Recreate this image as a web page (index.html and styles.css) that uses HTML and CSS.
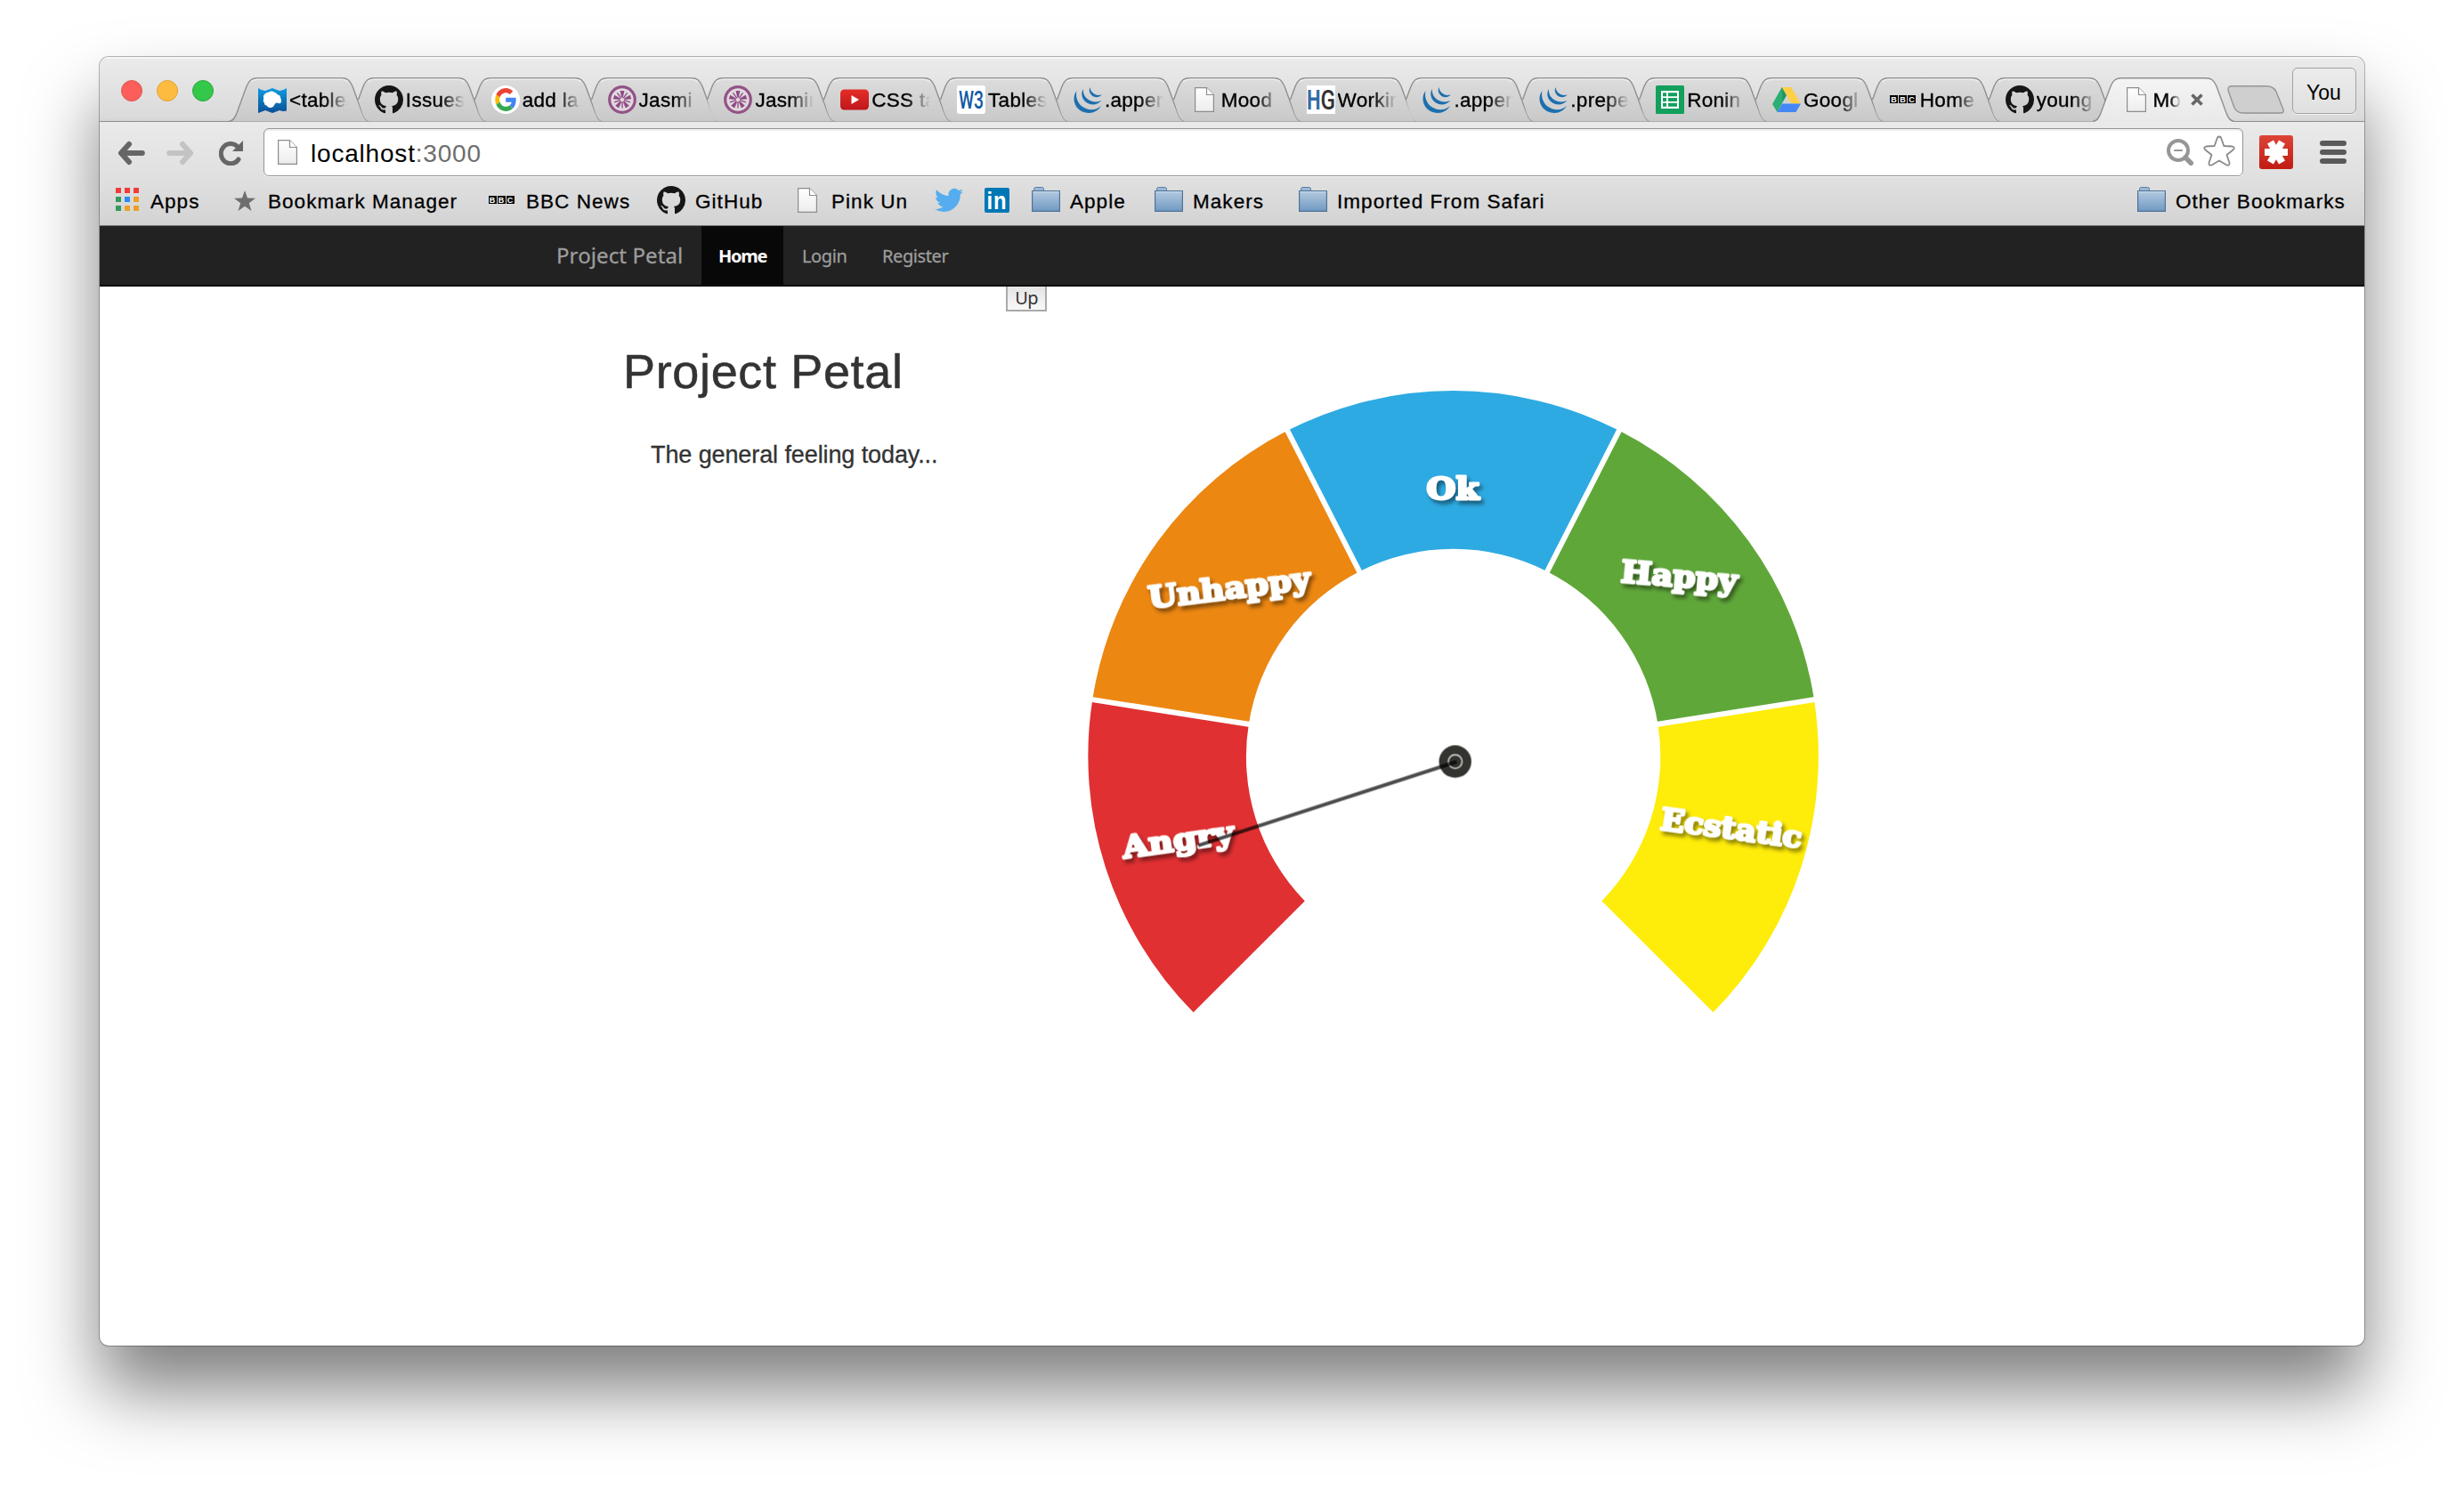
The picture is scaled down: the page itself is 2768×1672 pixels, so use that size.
FILE: index.html
```html
<!DOCTYPE html>
<html lang="en">
<head>
<meta charset="utf-8">
<title>Mood</title>
<link rel="stylesheet" href="styles.css">
</head>
<body>
<svg class="defs" width="0" height="0" aria-hidden="true">
  <defs>
    <linearGradient id="tabFill" x1="0" y1="0" x2="0" y2="1"><stop offset="0" stop-color="#dcdcdd"/><stop offset="1" stop-color="#c9c9ca"/></linearGradient>
    <linearGradient id="activeFill" x1="0" y1="0" x2="0" y2="1"><stop offset="0" stop-color="#f4f4f4"/><stop offset="1" stop-color="#e9e9e9"/></linearGradient>
    <linearGradient id="folderFill" x1="0" y1="0" x2="0" y2="1"><stop offset="0" stop-color="#b4cae0"/><stop offset="1" stop-color="#7099c2"/></linearGradient>
    <linearGradient id="pageFill" x1="0" y1="0" x2="0" y2="1"><stop offset="0" stop-color="#fff"/><stop offset="1" stop-color="#ececec"/></linearGradient>
    <linearGradient id="ytFill" x1="0" y1="0" x2="0" y2="1"><stop offset="0" stop-color="#e52d27"/><stop offset="1" stop-color="#bf171d"/></linearGradient>
    <linearGradient id="mapFill" x1="0" y1="0" x2="0" y2="1"><stop offset="0" stop-color="#0e9be0"/><stop offset="1" stop-color="#0a4f96"/></linearGradient>
    <linearGradient id="passFill" x1="0" y1="0" x2="0" y2="1"><stop offset="0" stop-color="#dd4338"/><stop offset="1" stop-color="#c11d12"/></linearGradient>
    <symbol id="tab-first" viewBox="0 0 160 50"><path fill="url(#tabFill)" d="M0 49.5C5 49 7 45 9 40L20 10C23 3 26 .8 32 .8H127C133 .8 136 3 139 10L150 40C152 45 154 49 159 49.5Z"/><path fill="none" stroke="#8f8f8f" stroke-width="1.4" d="M0 49.5C5 49 7 45 9 40L20 10C23 3 26 .8 32 .8H127C133 .8 136 3 139 10L150 40C152 45 154 49 159 49.5"/><path fill="none" stroke="#efefef" stroke-width="1.2" d="M25 5Q28 2.2 33 2.2H126Q131 2.2 134 5"/></symbol>
    <symbol id="tab-next" viewBox="0 0 160 50"><path fill="url(#tabFill)" d="M14.5 25L20 10C23 3 26 .8 32 .8H127C133 .8 136 3 139 10L150 40C152 45 154 49 159 49.5H28C23 49 21 45 19 40Z"/><path fill="none" stroke="#8f8f8f" stroke-width="1.4" d="M14.5 25L20 10C23 3 26 .8 32 .8H127C133 .8 136 3 139 10L150 40C152 45 154 49 159 49.5"/><path fill="none" stroke="#efefef" stroke-width="1.2" d="M25 5Q28 2.2 33 2.2H126Q131 2.2 134 5"/></symbol>
    <symbol id="tab-active" viewBox="0 0 160 50"><path fill="url(#activeFill)" d="M0 50C5 49 7 45 9 40L20 10C23 3 26 .8 32 .8H127C133 .8 136 3 139 10L150 40C152 45 154 49 160 50Z"/><path fill="none" stroke="#8f8f8f" stroke-width="1.4" d="M0 49.5C5 49 7 45 9 40L20 10C23 3 26 .8 32 .8H127C133 .8 136 3 139 10L150 40C152 45 154 49 159 49.5"/></symbol>
    <symbol id="page" viewBox="0 0 32 32"><path fill="url(#pageFill)" stroke="#8c8c8c" stroke-width="1.2" d="M5.6 2.6H18.5L26.4 10.5V29.4H5.6Z"/><path fill="#fff" stroke="#8c8c8c" stroke-width="1.2" d="M18.5 2.6V10.5H26.4"/></symbol>
    <symbol id="github" viewBox="0 0 16 16"><path fill="#171515" d="M8 0C3.58 0 0 3.58 0 8c0 3.54 2.29 6.53 5.47 7.59.4.07.55-.17.55-.38 0-.19-.01-.82-.01-1.49-2.01.37-2.53-.49-2.69-.94-.09-.23-.48-.94-.82-1.13-.28-.15-.68-.52-.01-.53.63-.01 1.08.58 1.23.82.72 1.21 1.87.87 2.33.66.07-.52.28-.87.51-1.07-1.78-.2-3.64-.89-3.64-3.95 0-.87.31-1.59.82-2.15-.08-.2-.36-1.02.08-2.12 0 0 .67-.21 2.2.82.64-.18 1.32-.27 2-.27.68 0 1.36.09 2 .27 1.53-1.04 2.2-.82 2.2-.82.44 1.1.16 1.92.08 2.12.51.56.82 1.27.82 2.15 0 3.07-1.87 3.75-3.65 3.95.29.25.54.73.54 1.48 0 1.07-.01 1.93-.01 2.2 0 .21.15.46.55.38A8.013 8.013 0 0016 8c0-4.42-3.58-8-8-8z"/></symbol>
    <symbol id="map" viewBox="0 0 32 32"><path fill="url(#mapFill)" d="M0 3Q4.500 6 8 6L16 3L24 6Q28 6 32 3V28.500Q28 29.500 24 28L16 31L8 28Q4 29.500 0 31Z"/><path fill="#fff" d="M6 11.500Q8 8 12 7.500Q15 5.500 18 7.500Q20.500 8 21.500 10L24.500 11.500L25.500 15Q27 17.500 25.500 19.500Q24 21 21.500 19.500Q19.500 19 18.500 21.500Q17.500 24.500 14.500 25Q11 25.500 9.500 22.500Q6.500 22 7 19.500Q5 18 6 15.500Z"/></symbol>
    <symbol id="google" viewBox="0 0 32 32"><circle cx="16" cy="16" r="16" fill="#fff"/><g transform="translate(4.200 3) scale(.5 .54)"><path fill="#EA4335" d="M24 9.500c3.540 0 6.710 1.220 9.210 3.600l6.850-6.850C35.900 2.380 30.470 0 24 0 14.620 0 6.510 5.380 2.560 13.220l7.980 6.190C12.430 13.720 17.740 9.500 24 9.500z"/><path fill="#4285F4" d="M46.980 24.550c0-1.570-.15-3.090-.38-4.550H24v9.020h12.940c-.58 2.960-2.260 5.480-4.780 7.180l7.730 6c4.510-4.180 7.090-10.360 7.090-17.650z"/><path fill="#FBBC05" d="M10.530 28.590c-.48-1.450-.76-2.990-.76-4.590s.27-3.140.76-4.590l-7.980-6.190C.92 16.460 0 20.120 0 24c0 3.880.92 7.540 2.560 10.780l7.970-6.190z"/><path fill="#34A853" d="M24 48c6.480 0 11.930-2.130 15.890-5.810l-7.730-6c-2.150 1.450-4.920 2.300-8.160 2.300-6.260 0-11.570-4.220-13.470-9.910l-7.980 6.190C6.510 42.620 14.620 48 24 48z"/></g></symbol>
    <symbol id="jasmine" viewBox="0 0 32 32"><circle cx="16" cy="16" r="14.300" fill="#e0d9df" stroke="#945286" stroke-width="3.200"/><g fill="#8f4a82"><path id="petal" d="M15.200 13.500L13.600 6H18.400L16.800 13.500Z"/><use href="#petal" transform="rotate(72 16 16)"/><use href="#petal" transform="rotate(144 16 16)"/><use href="#petal" transform="rotate(216 16 16)"/><use href="#petal" transform="rotate(288 16 16)"/></g><g stroke="#8f4a82" stroke-width="1.300"><path id="sepal" d="M16 18V25.500"/><use href="#sepal" transform="rotate(72 16 16)"/><use href="#sepal" transform="rotate(144 16 16)"/><use href="#sepal" transform="rotate(216 16 16)"/><use href="#sepal" transform="rotate(288 16 16)"/></g></symbol>
    <symbol id="youtube" viewBox="0 0 32 32"><rect y="4.500" width="32" height="23" rx="4.500" fill="url(#ytFill)"/><path fill="#fff" d="M12.500 11L21 16L12.500 21Z"/></symbol>
    <symbol id="w3" viewBox="0 0 32 32"><rect width="32" height="32" rx="3" fill="#fff"/><text x="2" y="25.500" font-family="Roboto, sans-serif" font-size="27" font-weight="500" fill="#1259a5" textLength="28" lengthAdjust="spacingAndGlyphs">W3</text></symbol>
    <symbol id="hg" viewBox="0 0 32 32"><rect width="32" height="32" fill="#fff"/><text x="0" y="27" font-family="Roboto, sans-serif" font-size="31" font-weight="700" fill="#346ca5" textLength="15.500" lengthAdjust="spacingAndGlyphs">H</text><text x="15.500" y="27" font-family="Roboto, sans-serif" font-size="31" font-weight="500" fill="#333" textLength="16.500" lengthAdjust="spacingAndGlyphs">G</text></symbol>
    <symbol id="jquery" viewBox="0 0 32 32"><g fill="#1d6fae"><path d="M3.500 6C-2 13 0 25 10 29.500C18 33 27 30 31 23C25 28.500 16 28.500 9.500 23.500C4 19 2 12 3.500 6Z"/><path d="M11 4C7.500 9 9.500 16 15 19.500C20.500 23 27.500 21.500 31.500 17C26 19.500 20.500 18.500 16 15.500C12 12.500 10.500 8.500 11 4Z"/><path d="M18.500 2C16.500 6 18.500 10.500 22.500 12.500C26 14 29.500 13 31.500 10.500C28 11.500 25 11 22.500 9C20 7.200 18.800 5 18.500 2Z"/></g></symbol>
    <symbol id="sheets" viewBox="0 0 32 32"><rect width="32" height="32" rx="1.500" fill="#12a05c"/><path fill="#fff" d="M6 6H26V26H6Z"/><path fill="#12a05c" d="M8 8.200H12V12.200H8ZM14 8.200H24V12.200H14ZM8 14H12V18H8ZM14 14H24V18H14ZM8 19.800H12V23.800H8ZM14 19.800H24V23.800H14Z"/></symbol>
    <symbol id="drive" viewBox="0 0 32 32"><path fill="#2bae73" d="M10.700 2L16 11L5.500 30L0 21Z"/><path fill="#ffcf48" d="M10.700 2H21.300L32 20.500H21.300Z"/><path fill="#4587f5" d="M11 20.500H32L26.500 30H5.500Z"/><path fill="#1b7c50" d="M10.700 2L16 11L11.500 18.500Z" opacity=".45"/></symbol>
    <symbol id="bbc" viewBox="0 0 32 32"><path d="M1 11H10V20H1ZM11 11H20V20H11ZM21 11H30V20H21Z"/><g font-family="Liberation Sans, Arial, sans-serif" font-size="9" font-weight="700" fill="#fff" text-anchor="middle"><text x="5.500" y="18.700">B</text><text x="15.500" y="18.700">B</text><text x="25.500" y="18.700">C</text></g></symbol>
    <symbol id="folder" viewBox="0 0 32 32"><path fill="#9db7d6" stroke="#5b7da3" d="M2.500 7V3.500Q2.500 1.500 4.500 1.500H11.500Q13.500 1.500 13.500 3.500V7"/><path fill="url(#folderFill)" stroke="#4f7398" stroke-width="1.200" d="M.6 5.600H31.400V28.400H.6Z"/><path stroke="#cfdfee" d="M1.200 6.700H30.800"/></symbol>
    <symbol id="back" viewBox="0 0 32 28"><path fill="none" stroke-width="6" stroke-linecap="round" stroke-linejoin="round" d="M13 4L4 14L13 24M4.500 14H27.800"/></symbol>
  </defs>
</svg>

<div class="window">
  <header class="tabstrip">
    <div class="lights"><span class="light light-close"></span><span class="light light-min"></span><span class="light light-max"></span></div>
    <nav class="tabs">
      <div class="tab"><svg class="shape"><use href="#tab-first"/></svg><svg class="icon"><use href="#map"/></svg><span class="title">&lt;table&gt;</span></div>
      <div class="tab"><svg class="shape"><use href="#tab-next"/></svg><svg class="icon"><use href="#github"/></svg><span class="title">Issues</span></div>
      <div class="tab"><svg class="shape"><use href="#tab-next"/></svg><svg class="icon"><use href="#google"/></svg><span class="title">add la</span></div>
      <div class="tab"><svg class="shape"><use href="#tab-next"/></svg><svg class="icon"><use href="#jasmine"/></svg><span class="title">Jasmi</span></div>
      <div class="tab"><svg class="shape"><use href="#tab-next"/></svg><svg class="icon"><use href="#jasmine"/></svg><span class="title">Jasmin</span></div>
      <div class="tab"><svg class="shape"><use href="#tab-next"/></svg><svg class="icon"><use href="#youtube"/></svg><span class="title">CSS ta</span></div>
      <div class="tab"><svg class="shape"><use href="#tab-next"/></svg><svg class="icon"><use href="#w3"/></svg><span class="title">Tables</span></div>
      <div class="tab"><svg class="shape"><use href="#tab-next"/></svg><svg class="icon"><use href="#jquery"/></svg><span class="title">.appen</span></div>
      <div class="tab"><svg class="shape"><use href="#tab-next"/></svg><svg class="icon"><use href="#page"/></svg><span class="title">Mood</span></div>
      <div class="tab"><svg class="shape"><use href="#tab-next"/></svg><svg class="icon"><use href="#hg"/></svg><span class="title">Workin</span></div>
      <div class="tab"><svg class="shape"><use href="#tab-next"/></svg><svg class="icon"><use href="#jquery"/></svg><span class="title">.appen</span></div>
      <div class="tab"><svg class="shape"><use href="#tab-next"/></svg><svg class="icon"><use href="#jquery"/></svg><span class="title">.prepe</span></div>
      <div class="tab"><svg class="shape"><use href="#tab-next"/></svg><svg class="icon"><use href="#sheets"/></svg><span class="title">Ronin</span></div>
      <div class="tab"><svg class="shape"><use href="#tab-next"/></svg><svg class="icon"><use href="#drive"/></svg><span class="title">Googl</span></div>
      <div class="tab"><svg class="shape"><use href="#tab-next"/></svg><svg class="icon"><use href="#bbc"/></svg><span class="title">Home</span></div>
      <div class="tab"><svg class="shape"><use href="#tab-next"/></svg><svg class="icon"><use href="#github"/></svg><span class="title">young</span></div>
      <div class="tab tab-active"><svg class="shape"><use href="#tab-active"/></svg><svg class="icon"><use href="#page"/></svg><span class="title">Mo</span><svg class="close" viewBox="0 0 16 16"><path d="M2.500 2.500L13.500 13.500M13.500 2.500L2.500 13.500"/></svg></div>
    </nav>
    <svg class="newtab" viewBox="0 0 64 32"><path fill="#cfcfcf" stroke="#949494" stroke-width="1.400" d="M4.500 .8H44Q52 .8 55 7L63 27Q64 31 60 31H18Q11 31 8 25L1.200 6Q.3 .8 4.500 .8Z"/></svg>
    <div class="user">You</div>
  </header>

  <div class="toolbar">
    <svg class="nav-icon back"><use href="#back"/></svg>
    <svg class="nav-icon forward"><use href="#back"/></svg>
    <svg class="reload" viewBox="0 0 28 28"><path fill="none" stroke="#666" stroke-width="5" stroke-linecap="round" d="M20.500 6.500A10.800 11.200 0 1 0 22 21"/><path fill="#666" d="M27 0V12H15Z"/></svg>
    <div class="omnibox">
      <svg class="icon"><use href="#page"/></svg>
      <span class="url">localhost<span class="port">:3000</span></span>
      <svg class="magnifier" viewBox="0 0 30 30"><g fill="none" stroke="#969696" stroke-linecap="round"><circle cx="13" cy="13" r="11" stroke-width="4"/><path stroke-width="5.500" d="M21 21L27.300 27.300"/><path stroke-width="2" d="M9 13H17"/></g></svg>
      <svg class="star-outline" viewBox="0 0 36 36"><path fill="#fff" stroke="#8a8a8a" stroke-width="1.800" stroke-linejoin="round" d="M18 1.500Q19.800 1.500 20.500 4L23.300 12L32.500 12.500Q36.500 13.500 33.500 16.500L26.500 22L29.500 31Q30 34.500 26.500 33.500L18 28.500L9.500 33.500Q6 34.500 6.500 31L9.500 22L2.500 16.500Q-.5 13.500 3.500 12.500L12.700 12L15.500 4Q16.200 1.500 18 1.500Z"/></svg>
    </div>
    <svg class="extension" viewBox="0 0 38 38"><rect width="38" height="38" rx="3" fill="url(#passFill)"/><g stroke="#fff" stroke-width="8"><path d="M6 19H32"/><path d="M12.500 7.500L25.500 30.500"/><path d="M25.500 7.500L12.500 30.500"/></g></svg>
    <svg class="menu" viewBox="0 0 30 26"><g fill="#5a5a5a"><rect width="30" height="6" rx="3"/><rect y="10" width="30" height="6" rx="3"/><rect y="20" width="30" height="6" rx="3"/></g></svg>
  </div>

  <div class="bookmarks">
    <a class="bookmark"><svg class="icon" viewBox="0 0 32 32"><path fill="#f13b3a" d="M4 2H10V8H4ZM14 2H20V8H14ZM24 2H30V8H24Z"/><path fill="#35995c" d="M4 12H10V18H4ZM4 22H10V28H4Z"/><path fill="#2c8bf2" d="M14 12H20V18H14Z"/><path fill="#ef9f27" d="M24 12H30V18H24ZM14 22H20V28H14ZM24 22H30V28H24Z"/></svg>Apps</a>
    <a class="bookmark"><svg class="icon" viewBox="0 0 32 32"><path fill="#6e6e6e" d="M17 5L20 13.500L29 13.700L21.800 19.200L24.500 28L17 22.800L9.500 28L12.200 19.200L5 13.700L14 13.500Z"/></svg>Bookmark Manager</a>
    <a class="bookmark"><svg class="icon"><use href="#bbc"/></svg>BBC News</a>
    <a class="bookmark"><svg class="icon"><use href="#github"/></svg>GitHub</a>
    <a class="bookmark"><svg class="icon"><use href="#page"/></svg>Pink Un</a>
    <a class="bookmark"><svg class="icon" viewBox="0 0 24 24"><path fill="#55acee" d="M23.953 4.570a10 10 0 01-2.825.775 4.958 4.958 0 002.163-2.723c-.951.555-2.005.959-3.127 1.184a4.920 4.920 0 00-8.384 4.482C7.690 8.095 4.067 6.130 1.640 3.162a4.822 4.822 0 00-.666 2.475c0 1.710.87 3.213 2.188 4.096a4.904 4.904 0 01-2.228-.616v.06a4.923 4.923 0 003.946 4.827 4.996 4.996 0 01-2.212.085 4.936 4.936 0 004.604 3.417 9.867 9.867 0 01-6.102 2.105c-.39 0-.779-.023-1.170-.067a13.995 13.995 0 007.557 2.209c9.053 0 13.998-7.496 13.998-13.985 0-.21 0-.42-.015-.63A9.935 9.935 0 0024 4.590z"/></svg></a>
    <a class="bookmark"><svg class="icon" viewBox="0 0 32 32"><rect x="2" y="2" width="28" height="28" rx="2" fill="#0077b5"/><text x="4.500" y="26" font-family="Liberation Sans, Arial, sans-serif" font-size="27" font-weight="700" fill="#fff" textLength="23" lengthAdjust="spacingAndGlyphs">in</text></svg></a>
    <a class="bookmark"><svg class="icon"><use href="#folder"/></svg>Apple</a>
    <a class="bookmark"><svg class="icon"><use href="#folder"/></svg>Makers</a>
    <a class="bookmark"><svg class="icon"><use href="#folder"/></svg>Imported From Safari</a>
    <a class="bookmark"><svg class="icon"><use href="#folder"/></svg>Other Bookmarks</a>
  </div>

  <nav class="navbar">
    <a class="brand">Project Petal</a>
    <a class="link link-active">Home</a>
    <a class="link link-login">Login</a>
    <a class="link link-register">Register</a>
  </nav>

  <main class="content">
    <button class="up">Up</button>
    <div class="row">
      <section class="intro">
        <h1>Project Petal</h1>
        <p>The general feeling today...</p>
      </section>
      <svg class="gauge" viewBox="-432.600 -429.400 860 730">
        <path fill="#e03032" d="M-292 288.200A410.300 410.300 0 0 1 -405.200 -64.200L-229.700 -36.400A232.600 232.600 0 0 0 -166.800 163Z"/>
        <path fill="#ec8712" d="M-405.200 -64.200A410.300 410.300 0 0 1 -186.300 -365.600L-105.600 -207.200A232.600 232.600 0 0 0 -229.700 -36.400Z"/>
        <path fill="#2eaae2" d="M-186.300 -365.600A410.300 410.300 0 0 1 186.300 -365.600L105.600 -207.200A232.600 232.600 0 0 0 -105.600 -207.200Z"/>
        <path fill="#60a73a" d="M186.300 -365.600A410.300 410.300 0 0 1 405.200 -64.200L229.700 -36.400A232.600 232.600 0 0 0 105.600 -207.200Z"/>
        <path fill="#feec0a" d="M405.200 -64.200A410.300 410.300 0 0 1 292 288.200L166.800 163A232.600 232.600 0 0 0 229.700 -36.400Z"/>
        <path stroke="#fff" stroke-width="6" d="M-188.600 -370.100L-103 -202.200M188.600 -370.100L103 -202.200M-410 -64L-225 -34.900M410 -64L225 -34.900"/>
        <g class="moods">
          <text transform="translate(-370 115) rotate(-8)" textLength="126" lengthAdjust="spacingAndGlyphs">Angry</text>
          <text transform="translate(-341 -165.500) rotate(-7)" textLength="183" lengthAdjust="spacingAndGlyphs">Unhappy</text>
          <text transform="translate(-30 -288.500)" textLength="59" lengthAdjust="spacingAndGlyphs">Ok</text>
          <text transform="translate(187.500 -195.500) rotate(4.800)" textLength="131" lengthAdjust="spacingAndGlyphs">Happy</text>
          <text transform="translate(231.500 82.500) rotate(7.600)" textLength="160" lengthAdjust="spacingAndGlyphs">Ecstatic</text>
        </g>
        <circle cx="2.100" cy="6.300" r="18.200" fill="#33332f"/>
        <circle cx="2.100" cy="6.300" r="7.700" fill="none" stroke="#d0d0d0" stroke-width="1.600"/>
        <path stroke="#000" stroke-opacity=".7" stroke-width="4" d="M3.800 6.500L-286.500 100.600"/>
      </svg>
    </div>
  </main>
</div>
</body>
</html>
```
FILE: styles.css
```css
* { box-sizing: border-box; }

body {
  margin: 0;
  height: 1672px;
  padding: 64px 112px 160px;
  background: #fff;
  font-family: "Liberation Sans", Arial, sans-serif;
  overflow: hidden;
}

.defs { position: absolute; }

.window {
  width: 2544px;
  height: 1448px;
  display: flex;
  flex-direction: column;
  background: #fff;
  border-radius: 10px;
  overflow: hidden;
  box-shadow: 0 0 0 1px rgba(0, 0, 0, .28), 0 50px 80px rgba(0, 0, 0, .5);
}

.icon { width: 32px; height: 32px; flex: none; }

/* tab strip */
.tabstrip {
  display: flex;
  height: 73px;
  flex: none;
  background: linear-gradient(#ebebeb, #dadada 95%, #d4d4d4);
  border-top: 2px solid #f6f6f6;
  border-bottom: 1px solid #8f8f8f;
}

.lights {
  display: flex;
  gap: 16px;
  width: 145px;
  padding: 24px 0 0 24px;
  flex: none;
}

.light { width: 24px; height: 24px; border-radius: 50%; border: 1px solid; }
.light-close { background: #fc5f5b; border-color: #e0524e; }
.light-min { background: #fdbc40; border-color: #dfa136; }
.light-max { background: #34c84a; border-color: #27a93a; }

.tabs { display: flex; padding-top: 21px; flex: none; }

.tab {
  position: relative;
  display: flex;
  width: 130.850px;
  height: 50px;
  padding: 9px 0 0 33px;
  flex: none;
}

.shape { position: absolute; left: 0; top: 0; width: 160px; height: 50px; }
.tab .icon { position: relative; }

.title {
  position: relative;
  width: 66px;
  margin-left: 3px;
  flex: none;
  overflow: hidden;
  white-space: nowrap;
  font-size: 22.500px;
  line-height: 33px;
  letter-spacing: .3px;
  -webkit-text-stroke: .35px #000;
  -webkit-mask-image: linear-gradient(to right, #000 60%, transparent 100%);
  mask-image: linear-gradient(to right, #000 60%, transparent 100%);
}

.tab-active { width: 151px; }
.tab-active .title { width: 31px; }

.close {
  position: relative;
  width: 16px;
  height: 16px;
  margin: 8px 0 0 10px;
  flex: none;
  stroke: #666;
  stroke-width: 3.600px;
}

.newtab { width: 64px; height: 32px; margin-top: 30px; flex: none; }

.user {
  width: 72px;
  height: 52px;
  margin: 10px 0 0 9px;
  border: 1px solid #a2a2a2;
  border-radius: 6px;
  background: linear-gradient(#ececec, #e0e0e0);
  box-shadow: 0 1px 0 #f4f4f4;
  font-size: 23px;
  line-height: 54px;
  text-align: center;
}

/* toolbar */
.toolbar {
  display: flex;
  height: 68px;
  flex: none;
  padding: 7px 20px 0;
  background: linear-gradient(#eaeaea, #dfdfdf);
}

.nav-icon { width: 32px; height: 28px; margin-top: 14px; flex: none; }
.back { stroke: #666; }
.forward { stroke: #c3c3c3; margin-left: 22px; transform: scaleX(-1); }
.reload { width: 28px; height: 28px; margin: 14px 0 0 28px; flex: none; }

.omnibox {
  display: flex;
  width: 2224px;
  height: 54px;
  margin-left: 22px;
  padding: 10px 8px 0 10px;
  flex: none;
  background: #fff;
  border: 1px solid #959595;
  border-radius: 6px;
  box-shadow: inset 0 2px 1px #eee, 0 1px 0 #f2f2f2;
}

.url { margin-left: 10px; flex: 1; font-size: 28px; line-height: 35px; letter-spacing: .800px; }
.port { color: #6e6e6e; }
.magnifier { width: 30px; height: 30px; margin: 1px 11px 0 0; }
.star-outline { width: 36px; height: 36px; margin-top: -3px; }
.extension { width: 38px; height: 38px; margin: 8px 0 0 18px; }
.menu { width: 30px; height: 26px; margin: 14px 0 0 30px; }

/* bookmarks */
.bookmarks {
  display: grid;
  grid-template-columns: 132px 290px 190px 153px 159px 54px 55px 138px 162px 1fr 243px;
  height: 49px;
  flex: none;
  padding: 4px 12px 0 14px;
  background: linear-gradient(#dfdfdf, #d3d3d3);
  border-bottom: 1px solid #777;
}

.bookmark {
  display: flex;
  height: 32px;
  gap: 11px;
  font-size: 22.500px;
  line-height: 35px;
  letter-spacing: 1.050px;
  white-space: nowrap;
  -webkit-text-stroke: .3px #000;
}

.bookmark svg { -webkit-text-stroke: 0; }

/* site */
.navbar {
  display: flex;
  height: 68px;
  flex: none;
  padding-left: 513px;
  background: #222;
  border-bottom: 2px solid #080808;
  font-family: "Noto Sans", sans-serif;
  font-size: 20px;
  line-height: 67px;
  color: #9d9d9d;
}

.brand { width: 163px; font-size: 24px; line-height: 65px; letter-spacing: .1px; -webkit-text-stroke: .3px #9d9d9d; }
.link { padding-left: 20px; -webkit-text-stroke: .3px #9d9d9d; }
.link-active { width: 92px; padding-left: 19px; background: #080808; color: #fff; font-weight: 700; letter-spacing: -1.300px; -webkit-text-stroke: 0; }
.link-login { width: 91px; padding-left: 21px; letter-spacing: -.4px; }
.link-register { letter-spacing: -.4px; }

.content { display: flex; flex-direction: column; color: #333; }

.up {
  width: 46px;
  height: 28px;
  margin: 0 0 0 1018px;
  padding: 0;
  border: 2px solid #aaa;
  border-top: 0;
  background: linear-gradient(#e4e4e4, #f8f8f8);
  font: 20px/26px "Noto Sans", sans-serif;
  letter-spacing: -.8px;
  color: #333;
}

.row { display: flex; }
.intro { width: 1088px; padding: 37px 0 0 588px; }
h1 { margin: 0; font-size: 54px; font-weight: 400; line-height: 60px; letter-spacing: .650px; -webkit-text-stroke: .5px #333; }
p { margin: 45px 0 0 31px; font-size: 27px; line-height: 38px; letter-spacing: -.1px; -webkit-text-stroke: .3px #333; }

.gauge { width: 860px; height: 730px; margin-top: 70px; }

.moods {
  font-family: "DejaVu Serif", serif;
  font-size: 33px;
  font-weight: 700;
  fill: #fff;
  stroke: #fff;
  stroke-width: 2.800px;
  stroke-linejoin: round;
  filter: drop-shadow(3px 4px 2px rgba(0, 0, 0, .45));
}
```
